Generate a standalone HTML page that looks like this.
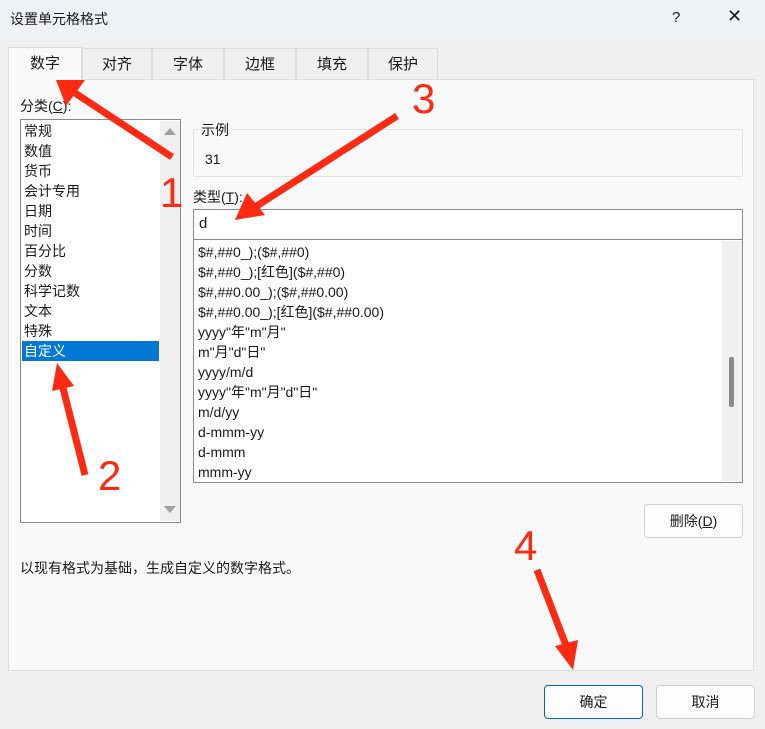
<!DOCTYPE html>
<html><head><meta charset="utf-8"><style>
*{margin:0;padding:0;box-sizing:border-box}
body{width:765px;height:729px;background:#f0f0f0;font-family:"Liberation Sans","Noto Sans CJK SC",sans-serif;font-size:14px;color:#1a1a1a;position:relative;overflow:hidden}
.a{position:absolute;white-space:nowrap}
#title{left:0;top:0;width:765px;height:37px;background:#eef2f7}
.tab{position:absolute;top:48px;height:31px;background:#f0f0f0;border:1px solid #dcdcdc;border-bottom:none;text-align:center;line-height:31px;font-size:15px}
#panel{left:8px;top:79px;width:746px;height:592px;background:#f9f9f9;border:1px solid #dedede}
.list{background:#fff;border:1px solid #8a8a8a}
.it{position:absolute;left:3px;height:20px;line-height:20px;font-size:14px}
.fi{position:absolute;left:4px;height:20px;line-height:20px;font-size:14px}
.btn{position:absolute;background:#fdfdfd;border:1px solid #d0d0d0;border-radius:4px;text-align:center;line-height:32px;font-size:14px}
u{text-decoration:underline}
</style></head><body>
<div class="a" id="title"></div>
<div class="a" style="left:10px;top:9px;font-size:14px">设置单元格格式</div>
<div class="a" style="left:672px;top:9px;font-size:15px">?</div>
<div class="a" style="left:727px;top:6px;font-size:18px">✕</div>

<div class="a" id="panel"></div>
<div class="tab" style="left:82px;width:70px">对齐</div>
<div class="tab" style="left:152px;width:72px">字体</div>
<div class="tab" style="left:224px;width:72px">边框</div>
<div class="tab" style="left:296px;width:72px">填充</div>
<div class="tab" style="left:368px;width:70px">保护</div>
<div class="tab" style="left:8px;top:47px;width:74px;height:34px;background:#f9f9f9;border-color:#dedede">数字</div>

<div class="a" style="left:20px;top:96px">分类(<u>C</u>):</div>
<div class="a list" style="left:20px;top:119px;width:161px;height:404px">
 <div class="it" style="top:1px">常规</div>
 <div class="it" style="top:21px">数值</div>
 <div class="it" style="top:41px">货币</div>
 <div class="it" style="top:61px">会计专用</div>
 <div class="it" style="top:81px">日期</div>
 <div class="it" style="top:101px">时间</div>
 <div class="it" style="top:121px">百分比</div>
 <div class="it" style="top:141px">分数</div>
 <div class="it" style="top:161px">科学记数</div>
 <div class="it" style="top:181px">文本</div>
 <div class="it" style="top:201px">特殊</div>
 <div class="it" style="top:221px;left:1px;width:137px;background:#0078d4;color:#fff;padding-left:2px">自定义</div>
 <div style="position:absolute;left:139px;top:1px;width:20px;height:400px;background:#f0f0f0"></div>
 <div style="position:absolute;left:143px;top:8px;width:0;height:0;border-left:6px solid transparent;border-right:6px solid transparent;border-bottom:7px solid #a0a0a0"></div>
 <div style="position:absolute;left:143px;top:386px;width:0;height:0;border-left:6px solid transparent;border-right:6px solid transparent;border-top:7px solid #a0a0a0"></div>
</div>

<div class="a" style="left:193px;top:129px;width:550px;height:48px;border:1px solid #e0e0e0;border-radius:2px"></div>
<div class="a" style="left:198px;top:120px;background:#f9f9f9;padding:0 3px">示例</div>
<div class="a" style="left:205px;top:151px">31</div>

<div class="a" style="left:193px;top:187px">类型(<u>T</u>):</div>
<div class="a" style="left:193px;top:209px;width:550px;height:31px;background:#fff;border:1px solid #8a8a8a;padding-left:5px;line-height:28px;font-size:15px">d</div>
<div class="a list" style="left:193px;top:239px;width:550px;height:244px;overflow:hidden">
 <div class="fi" style="top:2px">$#,##0_);($#,##0)</div>
 <div class="fi" style="top:22px">$#,##0_);[红色]($#,##0)</div>
 <div class="fi" style="top:42px">$#,##0.00_);($#,##0.00)</div>
 <div class="fi" style="top:62px">$#,##0.00_);[红色]($#,##0.00)</div>
 <div class="fi" style="top:82px">yyyy"年"m"月"</div>
 <div class="fi" style="top:102px">m"月"d"日"</div>
 <div class="fi" style="top:122px">yyyy/m/d</div>
 <div class="fi" style="top:142px">yyyy"年"m"月"d"日"</div>
 <div class="fi" style="top:162px">m/d/yy</div>
 <div class="fi" style="top:182px">d-mmm-yy</div>
 <div class="fi" style="top:202px">d-mmm</div>
 <div class="fi" style="top:222px">mmm-yy</div>
 <div style="position:absolute;left:528px;top:1px;width:20px;height:240px;background:#f0f0f0"></div>
 <div style="position:absolute;left:535px;top:117px;width:5px;height:50px;background:#8a8a8a;border-radius:2px"></div>
</div>

<div class="btn" style="left:644px;top:504px;width:99px;height:34px">删除(<u>D</u>)</div>
<div class="a" style="left:20px;top:558px">以现有格式为基础，生成自定义的数字格式。</div>

<div class="btn" style="left:544px;top:685px;width:99px;height:34px;border:1px solid #0067c0">确定</div>
<div class="btn" style="left:656px;top:685px;width:99px;height:34px">取消</div>

<svg class="a" style="left:0;top:0" width="765" height="729">
 <g stroke="#ff2a12" stroke-width="7" fill="#ff2a12">
  <line x1="172" y1="157" x2="72" y2="91"/>
  <line x1="397" y1="116" x2="255" y2="207"/>
  <line x1="85" y1="475" x2="63" y2="388"/>
  <line x1="537" y1="570" x2="567" y2="648"/>
 </g>
 <g fill="#ff2a12">
  <polygon points="56,80 85,80 66,106"/>
  <polygon points="235,220 247,193 265,215"/>
  <polygon points="57,363 52,391 74,386"/>
  <polygon points="573,670 555,646 578,640"/>
 </g>
 <g fill="#ff2a12" font-family="Liberation Sans,sans-serif" font-size="42">
  <text x="160" y="207">1</text>
  <text x="412" y="113">3</text>
  <text x="98" y="490">2</text>
  <text x="514" y="560">4</text>
 </g>
</svg>
</body></html>
